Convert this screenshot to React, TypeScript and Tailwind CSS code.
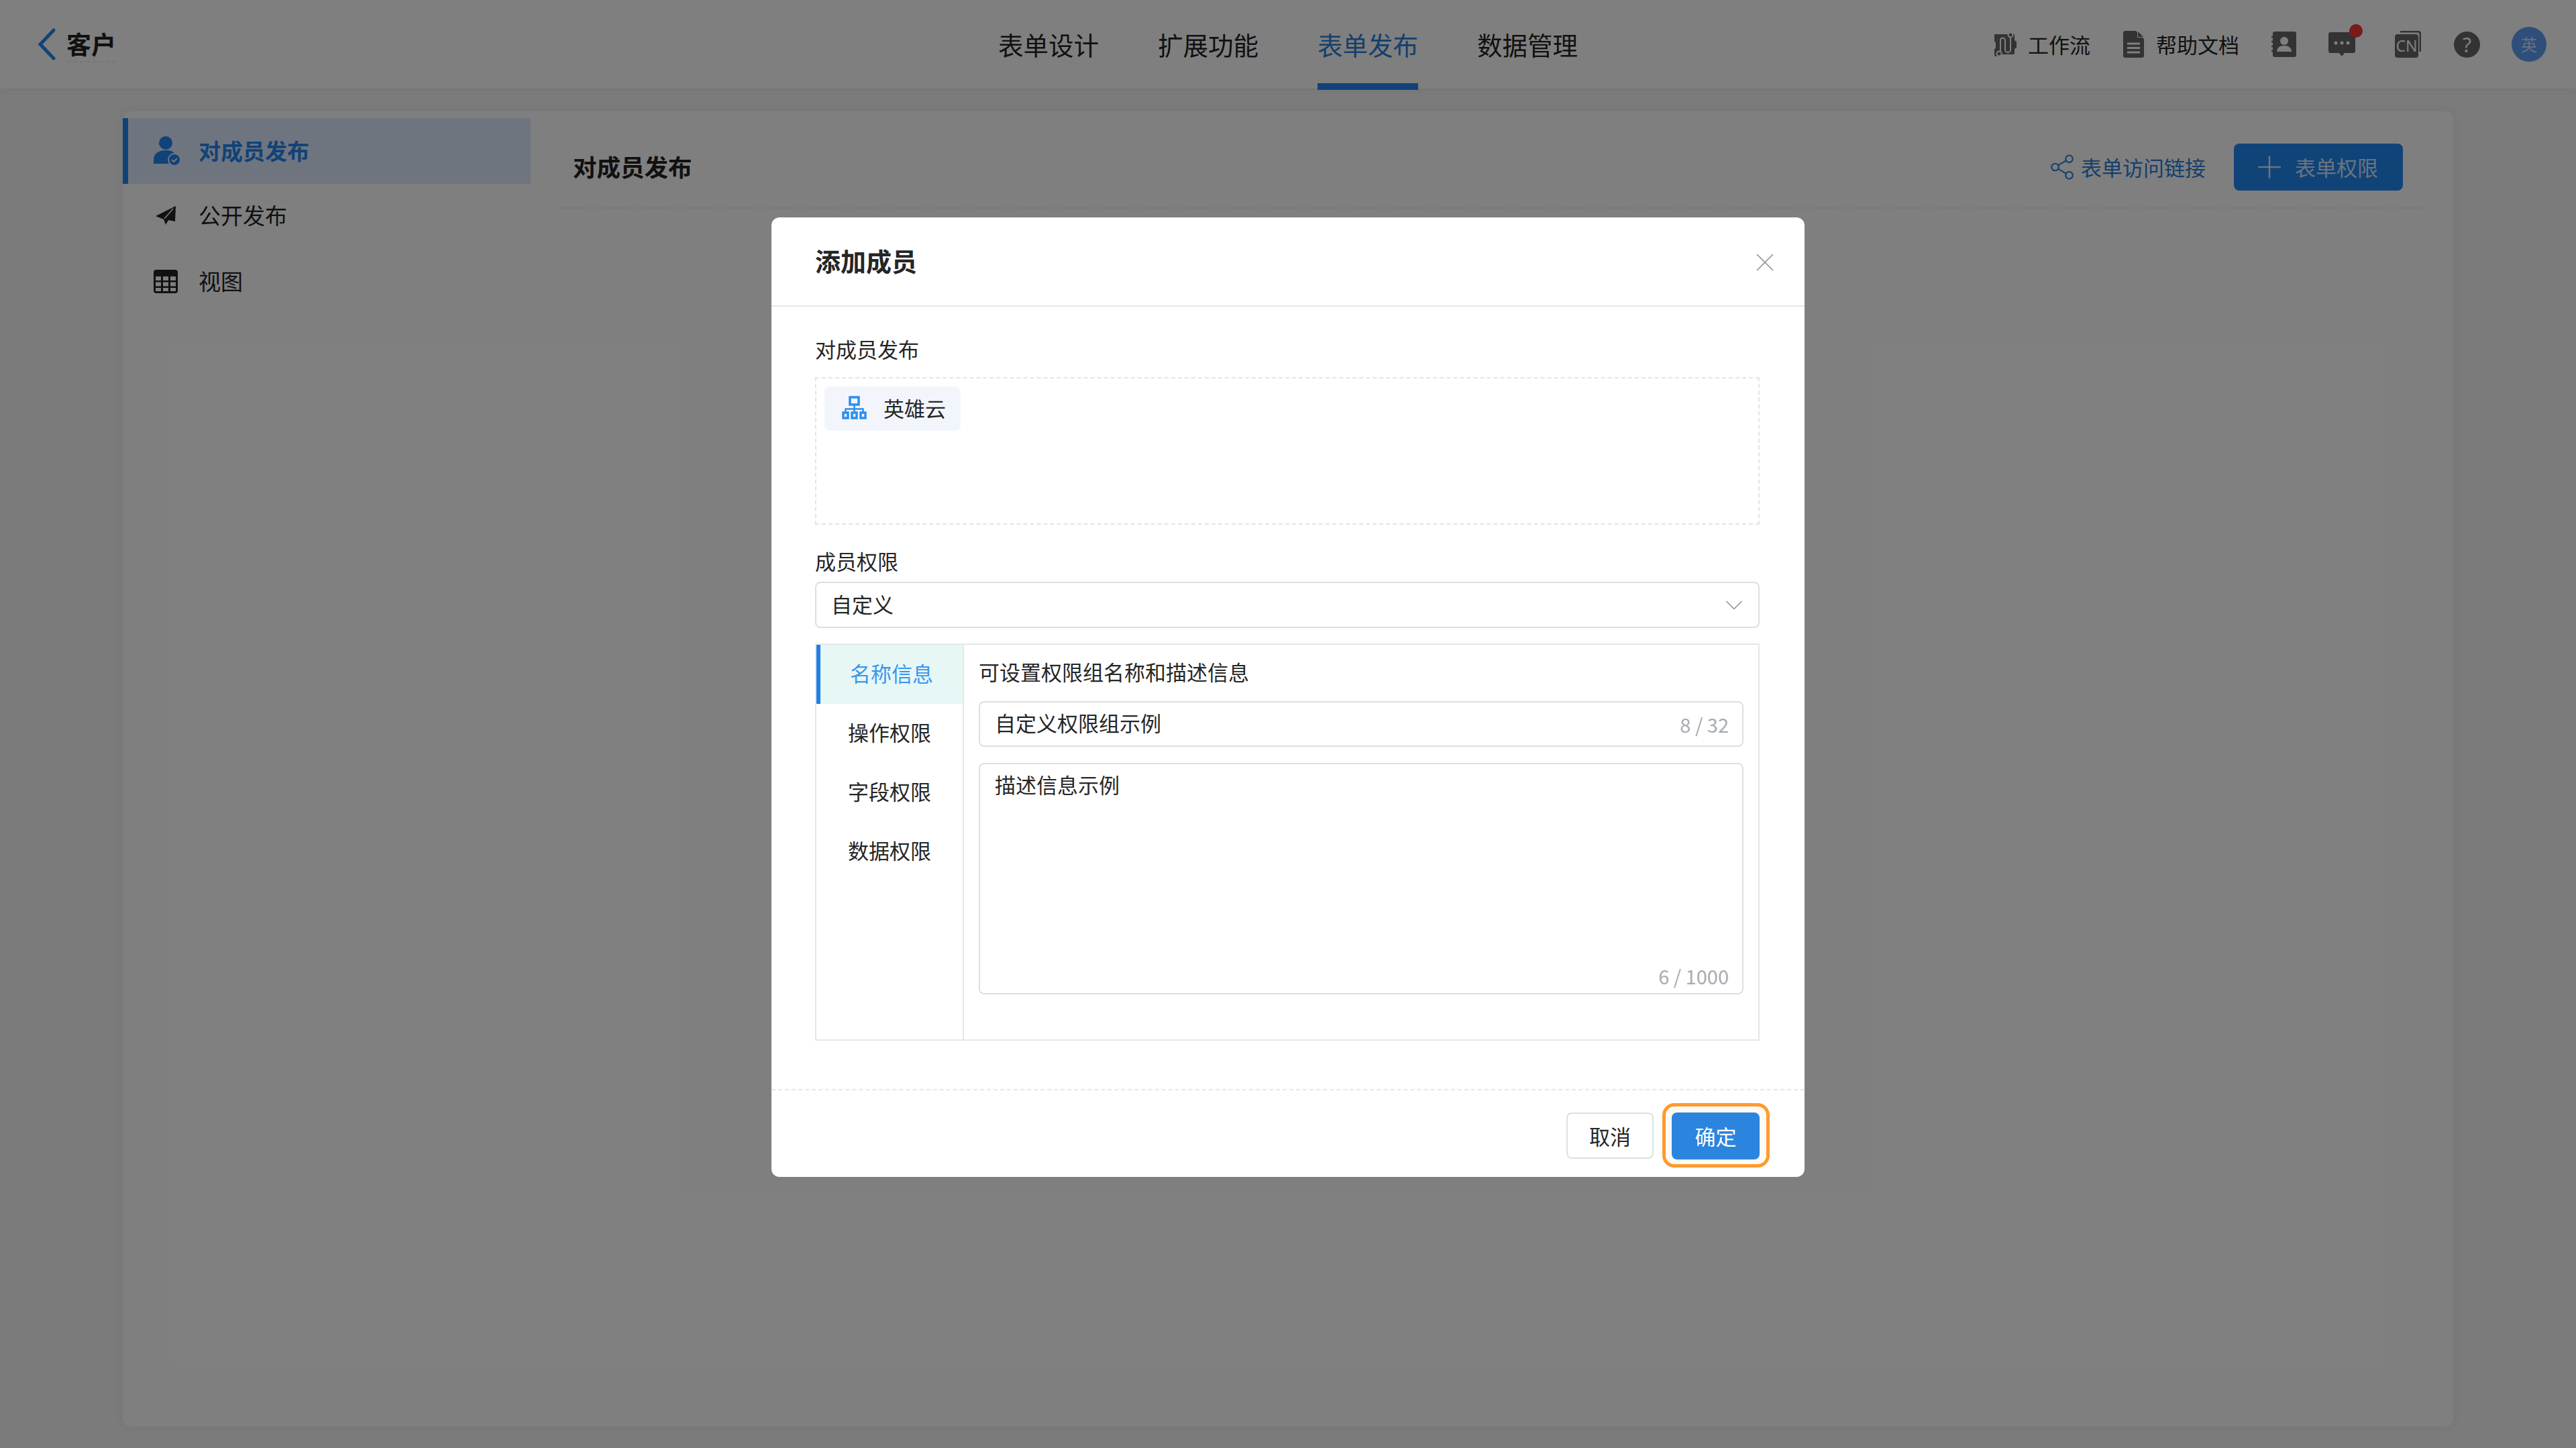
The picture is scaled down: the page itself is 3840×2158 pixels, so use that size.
import { ChevronDown, Plus, Share2, X } from 'lucide-react';

const navTabs = ['表单设计', '扩展功能', '表单发布', '数据管理'];
const permTabs = ['名称信息', '操作权限', '字段权限', '数据权限'];

function BackIcon() {
  return (
    <svg width="30" height="48" viewBox="0 0 30 48">
      <path d="M26 3L6 24l20 21" fill="none" stroke="#2087f0" strokeWidth="5" strokeLinecap="round" />
    </svg>
  );
}

function WorkflowIcon() {
  return (
    <svg width="35" height="38" viewBox="0 0 35 38">
      <path d="M2 4h25a3 3 0 0 1 5 3v6l3 2v9l-3 2v6a2 2 0 0 1-2 2H8a3 3 0 0 1-6 0v-7l2-3v-7l-2-3z" fill="#666" />
      <circle cx="26" cy="5" r="3.500" fill="#666" stroke="#fff" strokeWidth="2" />
      <circle cx="9" cy="33" r="3.500" fill="#666" stroke="#fff" strokeWidth="2" />
      <path d="M26 9v18a4 4 0 0 1-8 0V13a3.500 3.500 0 0 0-7 0v16" fill="none" stroke="#fff" strokeWidth="2" />
    </svg>
  );
}

function FileIcon() {
  return (
    <svg width="31" height="40" viewBox="0 0 31 40">
      <path d="M3 0h16l12 12v25a3 3 0 0 1-3 3H3a3 3 0 0 1-3-3V3a3 3 0 0 1 3-3z" fill="#666" />
      <path d="M21 0l10 10H21z" fill="#fff" />
      <path d="M22 1l8 8h-8z" fill="#666" />
      <path d="M6 19h19M6 25.500h19M6 32h19" stroke="#fff" strokeWidth="3" />
    </svg>
  );
}

function ContactIcon() {
  return (
    <svg width="37" height="38" viewBox="0 0 37 38">
      <rect x="2" y="0" width="35" height="38" rx="3" fill="#666" />
      <path d="M0 8h4M0 15h4M0 22h4M0 29h4" stroke="#666" strokeWidth="2.500" />
      <circle cx="19" cy="14" r="6" fill="#fff" />
      <path d="M8 30c0-6 5-9 11-9s11 3 11 9z" fill="#fff" />
    </svg>
  );
}

function ChatIcon() {
  return (
    <svg width="40" height="36" viewBox="0 0 40 36">
      <path d="M3 0h34a3 3 0 0 1 3 3v25a3 3 0 0 1-3 3H24l-4 5-4-5H3a3 3 0 0 1-3-3V3a3 3 0 0 1 3-3z" fill="#666" />
      <circle cx="11" cy="16" r="2.500" fill="#fff" />
      <circle cx="20" cy="16" r="2.500" fill="#fff" />
      <circle cx="29" cy="16" r="2.500" fill="#fff" />
    </svg>
  );
}

function CnIcon() {
  return (
    <svg width="39" height="40" viewBox="0 0 39 40">
      <path d="M8 1h26a4 4 0 0 1 4 4v26" fill="none" stroke="#666" strokeWidth="3" />
      <rect x="0" y="5" width="35" height="35" rx="4" fill="#666" />
      <text x="17.500" y="31" textAnchor="middle" fontSize="23" fill="#fff" fontFamily="'Noto Sans', sans-serif">
        CN
      </text>
    </svg>
  );
}

function HelpIcon() {
  return (
    <svg width="39" height="39" viewBox="0 0 39 39">
      <circle cx="19.500" cy="19.500" r="19.500" fill="#666" />
      <text x="19.500" y="31" textAnchor="middle" fontSize="30" fill="#fff" fontFamily="'Noto Sans', sans-serif">
        ?
      </text>
    </svg>
  );
}

function MemberIcon() {
  return (
    <svg width="40" height="44" viewBox="0 0 40 44">
      <circle cx="18" cy="10" r="10" fill="#2087f0" />
      <path d="M0 41v-6c0-9 7-14 18-14 6 0 10 1 13 4v16z" fill="#2087f0" />
      <circle cx="31" cy="35" r="9" fill="#2087f0" stroke="#deeaff" strokeWidth="2" />
      <path d="M27 35l3 3 5-5" fill="none" stroke="#deeaff" strokeWidth="2" />
    </svg>
  );
}

function PlaneIcon() {
  return (
    <svg width="31" height="28" viewBox="0 0 31 28">
      <path d="M30 0L0 15l12 5 3 8 4-7 10 2z" fill="#222" />
      <path d="M26 4L13 19" stroke="#fff" strokeWidth="1.500" />
    </svg>
  );
}

function TableIcon() {
  return (
    <svg width="36" height="35" viewBox="0 0 36 35">
      <rect width="36" height="35" rx="4" fill="#222" />
      <path
        d="M3 10h8v6H3zM14 10h8v6h-8zM25 10h8v6h-8zM3 18.500h8v6H3zM14 18.500h8v6h-8zM25 18.500h8v6h-8zM3 27h8v5H3zM14 27h8v5h-8zM25 27h8v5h-8z"
        fill="#fff"
      />
    </svg>
  );
}

function OrgIcon() {
  return (
    <svg width="37" height="35" viewBox="0 0 37 35">
      <g fill="none" stroke="#2b8fee" strokeWidth="3.500">
        <rect x="12" y="2" width="13" height="11" />
        <rect x="2" y="25" width="7" height="8" />
        <rect x="15" y="25" width="7" height="8" />
        <rect x="28" y="25" width="7" height="8" />
        <path d="M18.500 13v12M5.500 25v-5.500h26V25" strokeWidth="2.500" />
      </g>
    </svg>
  );
}

export default function App() {
  return (
    <div className="relative flex h-[2158px] w-full flex-col overflow-hidden bg-[#f6f6f6] font-['Noto_Sans_CJK_SC','Noto_Sans',sans-serif] text-[#222]">
      {/* 상단 바 */}
      <header className="relative z-10 grid h-[132px] shrink-0 grid-cols-[1fr_auto_1fr] bg-white shadow-[0_2px_10px_rgba(0,0,0,0.06)]">
        <div className="flex items-center pl-[54px]">
          <BackIcon />
          <span className="ml-[15px] border-b-2 border-dashed border-[#eee] text-[37px] leading-[52px] font-bold">客户</span>
        </div>
        <nav className="flex gap-[88px]">
          {navTabs.map((t) => (
            <div
              key={t}
              className={`relative flex items-center text-[37.5px] ${t === '表单发布' ? 'text-[#2a7fd8]' : 'text-[#222]'}`}
            >
              {t}
              {t === '表单发布' && <span className="absolute right-0 bottom-[-2px] left-0 h-[10px] bg-[#2087f0]" />}
            </div>
          ))}
        </nav>
        <div className="flex items-center justify-end pr-[44px] text-[31px]">
          <WorkflowIcon />
          <span className="ml-[17px]">工作流</span>
          <span className="ml-[49px]">
            <FileIcon />
          </span>
          <span className="ml-[18px]">帮助文档</span>
          <span className="ml-[48px]">
            <ContactIcon />
          </span>
          <span className="relative ml-[48px]">
            <ChatIcon />
            <span className="absolute top-[-12px] right-[-11px] size-[20px] rounded-full bg-[#f43434]" />
          </span>
          <span className="ml-[59px]">
            <CnIcon />
          </span>
          <span className="ml-[49px]">
            <HelpIcon />
          </span>
          <span className="ml-[47px] flex size-[52px] items-center justify-center rounded-full bg-[#5e9ff5] text-[24px] text-white/70">
            英
          </span>
        </div>
      </header>

      {/* 본문 */}
      <main className="flex-1 px-[183px] pt-[34px] pb-[32px]">
        <div className="flex h-full rounded-[12px] bg-white shadow-[0_0_14px_rgba(0,0,0,0.06)]">
          <aside className="w-[608px] shrink-0 pt-[10px] text-[33px]">
            <div className="flex h-[98px] items-center border-l-[8px] border-[#2087f0] bg-[#deeaff] pl-[38px] font-bold text-[#2087f0]">
              <MemberIcon />
              <span className="ml-[27px]">对成员发布</span>
            </div>
            <div className="flex h-[98px] items-center pb-[4px] pl-[49px]">
              <PlaneIcon />
              <span className="ml-[33px]">公开发布</span>
            </div>
            <div className="flex h-[98px] items-center pb-[4px] pl-[46px]">
              <TableIcon />
              <span className="ml-[31px]">视图</span>
            </div>
          </aside>
          <section className="flex-1 px-[44px]">
            <div className="flex h-[145px] items-start justify-between border-b-2 border-dashed border-[#eee] pt-[48px] pr-[31px] pl-[19px]">
              <h2 className="text-[35.5px] leading-[68px] font-bold">对成员发布</h2>
              <div className="flex h-[70px] items-center">
                <Share2 size={42} strokeWidth={1.2} className="text-[#2a7fd8]" />
                <span className="ml-[7px] text-[31px] text-[#2a7fd8]">表单访问链接</span>
                <button className="ml-[42px] flex h-[70px] w-[252px] items-center rounded-[8px] bg-[#2087f0] pl-[26px] text-[31px] text-white/80">
                  <Plus size={54} strokeWidth={1.1} />
                  <span className="ml-[11px]">表单权限</span>
                </button>
              </div>
            </div>
          </section>
        </div>
      </main>

      {/* 遮罩 + 弹窗 */}
      <div className="absolute inset-0 z-20 flex items-start justify-center bg-black/50 pt-[324px]">
        <div className="flex h-[1430px] w-[1540px] flex-col rounded-[12px] bg-white text-[31px] leading-[40px] text-[#262626]">
          <div className="flex h-[133px] shrink-0 items-center justify-between border-b-2 border-[#e6e6e8] pr-[36px] pl-[65px]">
            <h3 className="pb-[4px] text-[38px] font-bold">添加成员</h3>
            <X size={46} strokeWidth={0.9} className="mt-[2px] text-[#909399]" />
          </div>

          <div className="flex-1 pt-[43px] pr-[67px] pl-[65px]">
            <div>对成员发布</div>
            <div className="mt-[22px] h-[220px] border-2 border-dashed border-[#e4e4e7] p-[12px]">
              <div className="flex h-[66px] w-[203px] items-center rounded-[8px] bg-[#f2f6fc] pb-[3px] pl-[26px]">
                <OrgIcon />
                <span className="ml-[25px]">英雄云</span>
              </div>
            </div>

            <div className="mt-[34px]">成员权限</div>
            <div className="mt-[11px] flex h-[69px] items-center justify-between rounded-[8px] border-2 border-[#dcdfe6] pr-[14px] pl-[22px]">
              <span className="pb-[4px]">自定义</span>
              <ChevronDown size={44} strokeWidth={0.9} className="text-[#909399]" />
            </div>

            <div className="mt-[23px] flex h-[592px] border-2 border-[#e6e6e8]">
              <div className="w-[220px] shrink-0 border-r-2 border-[#e6e6e8]">
                {permTabs.map((t, i) => (
                  <div
                    key={t}
                    className={
                      i === 0
                        ? 'flex h-[88px] items-center justify-center border-l-[6px] border-[#1f80e6] bg-[#e6f7f6] pb-[4px] text-[#3a96ec]'
                        : 'flex h-[88px] items-center justify-center pb-[4px]'
                    }
                  >
                    {t}
                  </div>
                ))}
              </div>
              <div className="flex-1 px-[22px] pt-[20px]">
                <div>可设置权限组名称和描述信息</div>
                <div className="mt-[24px] flex h-[68px] items-center justify-between rounded-[8px] border-2 border-[#dcdfe6] pr-[20px] pl-[22px]">
                  <span className="pb-[4px]">自定义权限组示例</span>
                  <span className="text-[29px] text-[#a8abb2]">8 / 32</span>
                </div>
                <div className="relative mt-[24px] h-[345px] rounded-[8px] border-2 border-[#dcdfe6] px-[22px] pt-[10px]">
                  描述信息示例
                  <span className="absolute right-[20px] bottom-[6px] text-[29px] text-[#a8abb2]">6 / 1000</span>
                </div>
              </div>
            </div>
          </div>

          <div className="flex h-[131px] shrink-0 items-start justify-end gap-[27px] border-t-2 border-dashed border-[#e6e6e8] pt-[33px] pr-[67px]">
            <button className="h-[69px] w-[130px] rounded-[8px] border-2 border-[#dcdfe6] bg-white text-[31px]">取消</button>
            <div className="relative z-0">
              <span className="absolute -top-[14px] -right-[15px] -bottom-[12px] -left-[14px] -z-10 rounded-[18px] border-[5px] border-[#ff9a2e] bg-[#fdf9f4]" />
              <button className="block h-[70px] w-[131px] rounded-[8px] bg-[#2b85de] text-[31px] text-white">确定</button>
            </div>
          </div>
        </div>
      </div>
    </div>
  );
}
